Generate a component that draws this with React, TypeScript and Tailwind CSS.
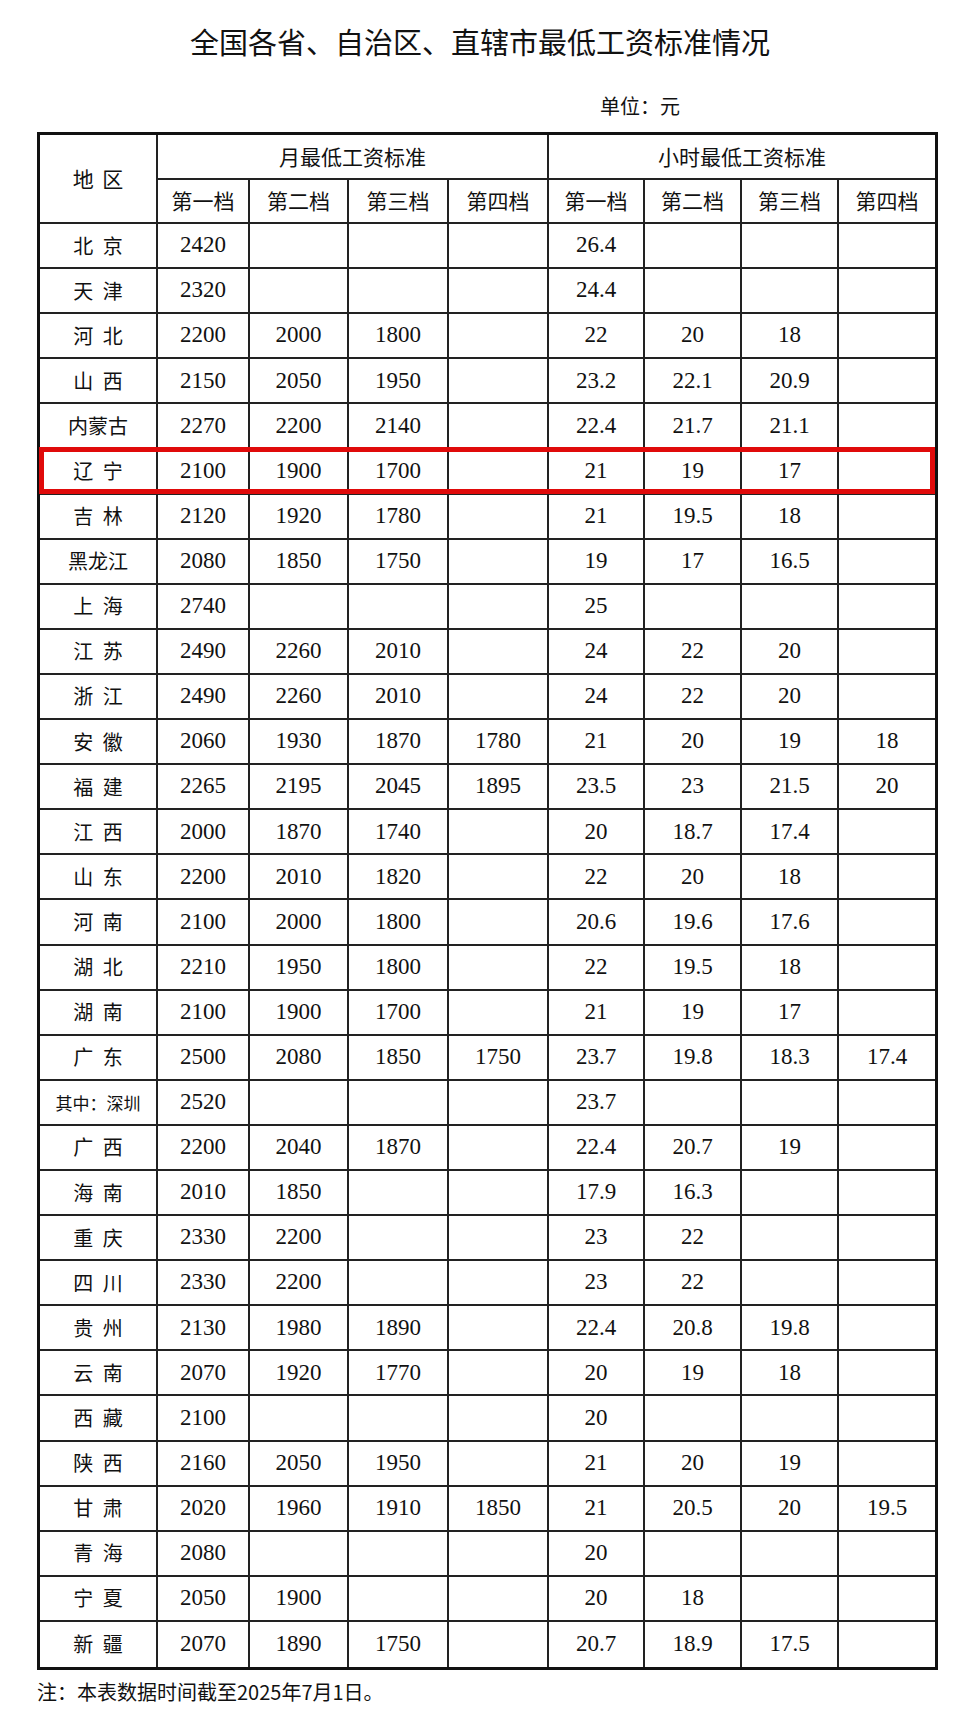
const rows: string[][] = [
  ["北京", "2420", "", "", "", "26.4", "", "", ""],
  ["天津", "2320", "", "", "", "24.4", "", "", ""],
  ["河北", "2200", "2000", "1800", "", "22", "20", "18", ""],
  ["山西", "2150", "2050", "1950", "", "23.2", "22.1", "20.9", ""],
  ["内蒙古", "2270", "2200", "2140", "", "22.4", "21.7", "21.1", ""],
  ["辽宁", "2100", "1900", "1700", "", "21", "19", "17", ""],
  ["吉林", "2120", "1920", "1780", "", "21", "19.5", "18", ""],
  ["黑龙江", "2080", "1850", "1750", "", "19", "17", "16.5", ""],
  ["上海", "2740", "", "", "", "25", "", "", ""],
  ["江苏", "2490", "2260", "2010", "", "24", "22", "20", ""],
  ["浙江", "2490", "2260", "2010", "", "24", "22", "20", ""],
  ["安徽", "2060", "1930", "1870", "1780", "21", "20", "19", "18"],
  ["福建", "2265", "2195", "2045", "1895", "23.5", "23", "21.5", "20"],
  ["江西", "2000", "1870", "1740", "", "20", "18.7", "17.4", ""],
  ["山东", "2200", "2010", "1820", "", "22", "20", "18", ""],
  ["河南", "2100", "2000", "1800", "", "20.6", "19.6", "17.6", ""],
  ["湖北", "2210", "1950", "1800", "", "22", "19.5", "18", ""],
  ["湖南", "2100", "1900", "1700", "", "21", "19", "17", ""],
  ["广东", "2500", "2080", "1850", "1750", "23.7", "19.8", "18.3", "17.4"],
  ["其中：深圳", "2520", "", "", "", "23.7", "", "", ""],
  ["广西", "2200", "2040", "1870", "", "22.4", "20.7", "19", ""],
  ["海南", "2010", "1850", "", "", "17.9", "16.3", "", ""],
  ["重庆", "2330", "2200", "", "", "23", "22", "", ""],
  ["四川", "2330", "2200", "", "", "23", "22", "", ""],
  ["贵州", "2130", "1980", "1890", "", "22.4", "20.8", "19.8", ""],
  ["云南", "2070", "1920", "1770", "", "20", "19", "18", ""],
  ["西藏", "2100", "", "", "", "20", "", "", ""],
  ["陕西", "2160", "2050", "1950", "", "21", "20", "19", ""],
  ["甘肃", "2020", "1960", "1910", "1850", "21", "20.5", "20", "19.5"],
  ["青海", "2080", "", "", "", "20", "", "", ""],
  ["宁夏", "2050", "1900", "", "", "20", "18", "", ""],
  ["新疆", "2070", "1890", "1750", "", "20.7", "18.9", "17.5", ""],
];

const tiers = ["第一档", "第二档", "第三档", "第四档"];

const cjk = "font-['Noto_Sans_CJK_SC',sans-serif]";
const serif = "font-['Liberation_Serif','Noto_Serif_CJK_SC',serif]";

function cellBorder(lastCol: boolean, lastRow: boolean) {
  return [
    "flex items-center justify-center border-[#222]",
    lastCol ? "" : "border-r-2",
    lastRow ? "" : "border-b-2",
  ].join(" ");
}

function regionLabel(name: string) {
  if (name.length === 2) return `${name[0]} ${name[1]}`;
  return name;
}

export default function App() {
  return (
    <div className="min-h-screen w-[960px] bg-white pt-[24px] text-[#111]">
      <h1 className={`${cjk} text-center text-[29px] leading-[35px]`}>
        全国各省、自治区、直辖市最低工资标准情况
      </h1>
      <p className={`${cjk} ml-[600px] mt-[33px] text-[20px] leading-[28px]`}>单位：元</p>

      <div className="relative ml-[37px] mt-[12px] w-[901px] border-[3px] border-[#111]">
        <div className="grid grid-cols-[118px_92px_99px_100px_100px_96px_97px_97px_96px]">
          <div className={`${cellBorder(false, false)} ${cjk} row-span-2 text-[21px] [word-spacing:4px]`}>
            地 区
          </div>
          <div className={`${cellBorder(false, false)} ${cjk} col-span-4 h-[45px] text-[21px]`}>
            月最低工资标准
          </div>
          <div className={`${cellBorder(true, false)} ${cjk} col-span-4 h-[45px] text-[21px]`}>
            小时最低工资标准
          </div>
          {[...tiers, ...tiers].map((t, i) => (
            <div key={i} className={`${cellBorder(i === 7, false)} ${cjk} h-[44px] text-[21px]`}>
              {t}
            </div>
          ))}

          {rows.map((row, r) =>
            row.map((v, c) => {
              const lastRow = r === rows.length - 1;
              const lastCol = c === row.length - 1;
              if (c === 0) {
                const small = v.length > 3;
                return (
                  <div
                    key={`${r}-${c}`}
                    className={`${cellBorder(lastCol, lastRow)} ${cjk} h-[45.1px] ${
                      small ? "text-[17px]" : "text-[20px] [word-spacing:5px]"
                    }`}
                  >
                    {small ? "其中：深圳" : regionLabel(v)}
                  </div>
                );
              }
              return (
                <div
                  key={`${r}-${c}`}
                  className={`${cellBorder(lastCol, lastRow)} ${serif} h-[45.1px] text-[23px]`}
                >
                  {v}
                </div>
              );
            })
          )}
        </div>

        {/* red highlight around 辽宁 */}
        <div className="pointer-events-none absolute left-[-1px] top-[312px] h-[47px] w-[896px] border-[5px] border-[#e00a0a]" />
      </div>

      <p className={`${cjk} ml-[37px] mt-[8px] text-[20px] leading-[28px]`}>
        注：本表数据时间截至2025年7月1日。
      </p>
    </div>
  );
}
